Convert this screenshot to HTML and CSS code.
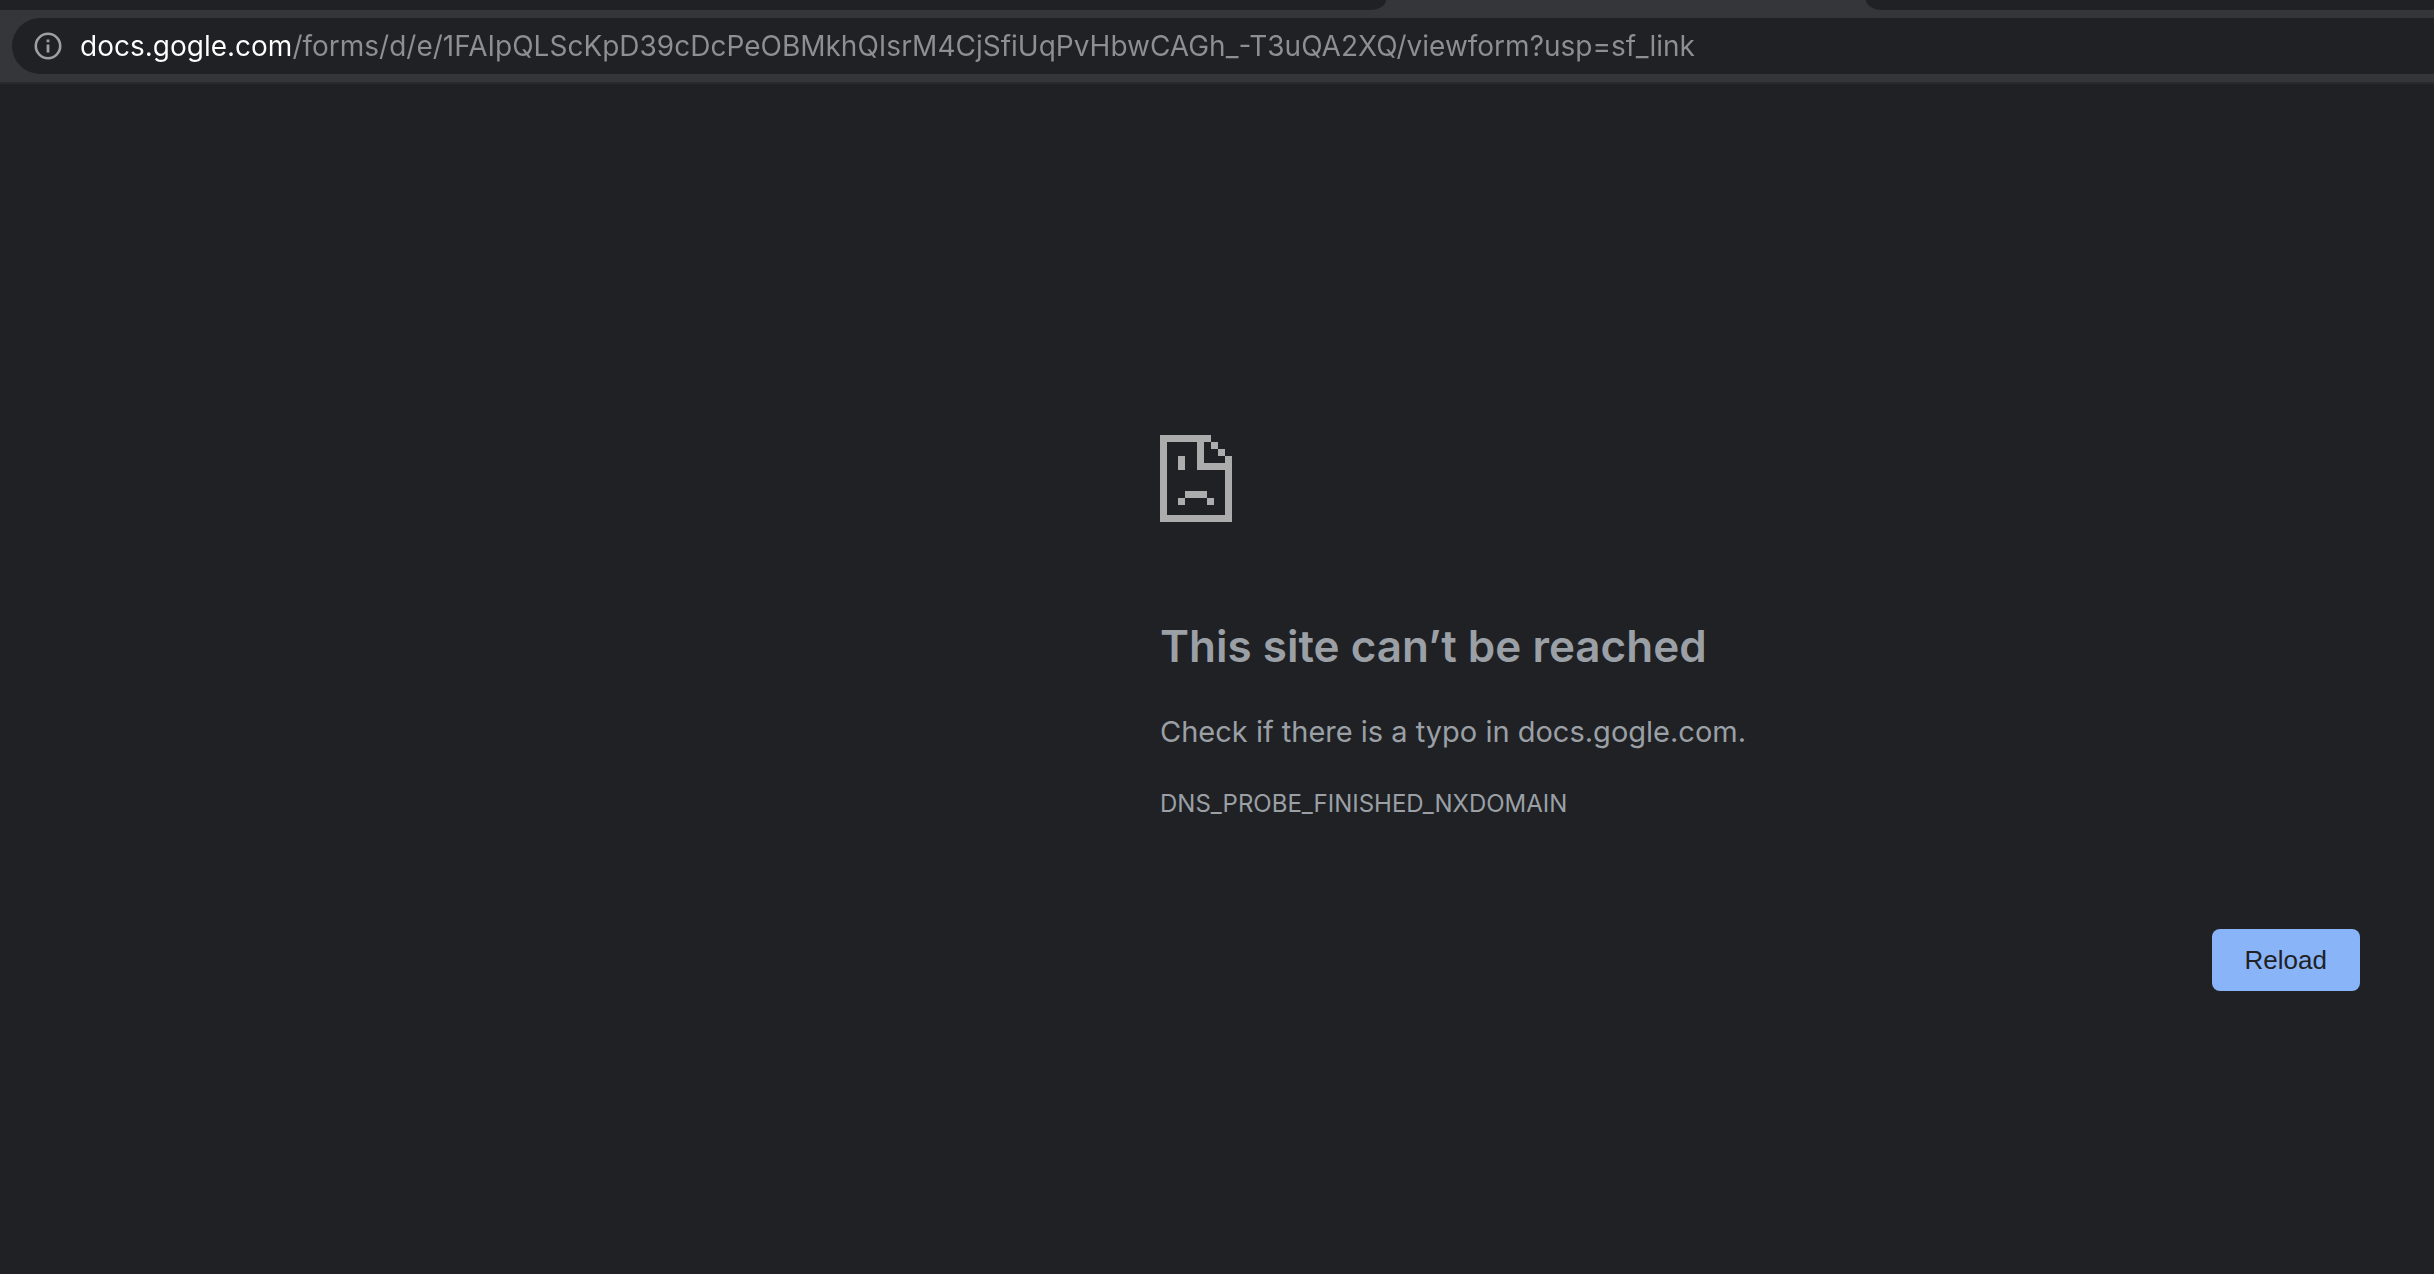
FILE: index.html
```html
<!DOCTYPE html>
<html lang="en">
<head>
  <meta charset="UTF-8">
  <title>docs.gogle.com</title>
  <link rel="stylesheet" href="styles.css">
</head>
<body>
  <header class="browser">
    <div class="tab-strip">
      <div class="tab tab-before"></div>
      <div class="tab-active"></div>
      <div class="tab tab-after"></div>
    </div>
    <div class="toolbar">
      <form class="omnibox">
        <button class="site-info" type="button" aria-label="View site information">
          <svg viewBox="0 0 28 28" width="28" height="28">
            <circle cx="14" cy="14" r="12.2" fill="none" stroke="#9aa0a6" stroke-width="2.6"/>
            <path d="M12.6 7.4h2.8v2.8h-2.8zM12.6 12.6h2.8v8h-2.8z" fill="#9aa0a6"/>
          </svg>
        </button>
        <input class="url" type="text" aria-label="Address bar" spellcheck="false" value="docs.gogle.com/forms/d/e/1FAIpQLScKpD39cDcPeOBMkhQIsrM4CjSfiUqPvHbwCAGh_-T3uQA2XQ/viewform?usp=sf_link">
      </form>
    </div>
  </header>

  <main class="error-page">
    <svg class="sad-file" viewBox="0 0 216 261" width="72" height="87" fill="#acacac" shape-rendering="crispEdges" aria-hidden="true">
      <path d="M0 0h153v21h-21v63h63v-21h21v198H0zM21 21v219h174V105h-84V21z" fill-rule="evenodd"/>
      <path d="M153 21h21v21h-21zM174 42h21v21h-21z"/>
      <path d="M54 63h21v42H54zM75 168h66v21H75zM54 189h21v21H54zM141 189h21v21h-21z"/>
    </svg>
    <h1>This site can’t be reached</h1>
    <p class="summary">Check if there is a typo in docs.gogle.com.</p>
    <p class="error-code">DNS_PROBE_FINISHED_NXDOMAIN</p>
    <div class="actions">
      <button class="reload" type="button">Reload</button>
    </div>
  </main>

  <script>
    document.querySelector('.reload').addEventListener('click', () => location.reload());
  </script>
</body>
</html>
```

FILE: styles.css
```css
* {
  box-sizing: border-box;
}

body {
  margin: 0;
  background: #202124;
  color: #9aa0a6;
  font-family: Inter, "Liberation Sans", sans-serif;
}

.browser {
  background: #35363a;
  border-bottom: 2px solid #292a2c;
}

.tab-strip {
  display: flex;
  height: 10px;
}

.tab {
  background: #202124;
}

.tab-before {
  flex: 1386;
  border-bottom-right-radius: 16px 10px;
}

.tab-active {
  flex: 480;
}

.tab-after {
  flex: 568;
  border-bottom-left-radius: 16px 10px;
}

.toolbar {
  padding: 8px 0 8px 12px;
}

.omnibox {
  display: flex;
  align-items: center;
  gap: 18px;
  height: 56px;
  padding-left: 22px;
  background: #202124;
  border-radius: 28px 0 0 28px;
}

.site-info {
  display: flex;
  padding: 0;
  border: none;
  background: none;
  cursor: pointer;
}

/* host in white, rest of the address dimmed */
.url {
  flex: 1;
  height: 56px;
  padding: 0;
  border: none;
  outline: none;
  font-family: inherit;
  font-size: 28px;
  color: transparent;
  background: linear-gradient(to right, #fff 211px, #8e8f92 211px);
  -webkit-background-clip: text;
  background-clip: text;
}

.error-page {
  max-width: 1274px;
  margin-left: auto;
  padding: 351px 74px 0 0;
}

.sad-file {
  display: block;
}

h1 {
  margin: 94px 0 0;
  font-size: 44px;
  font-weight: 600;
  line-height: 60px;
}

.summary {
  margin: 34px 0 0;
  font-size: 29px;
  line-height: 44px;
}

.error-code {
  margin: 32px 0 0;
  font-size: 24px;
  line-height: 36px;
}

.actions {
  display: flex;
  justify-content: flex-end;
  margin-top: 107px;
}

.reload {
  padding: 16px 33px;
  border: none;
  border-radius: 8px;
  background: #8ab4f8;
  color: #202124;
  font-family: "Liberation Sans", Arial, sans-serif;
  font-size: 26px;
  line-height: 30px;
  cursor: pointer;
}

.reload:hover {
  background: #9dc0f9;
}
```
